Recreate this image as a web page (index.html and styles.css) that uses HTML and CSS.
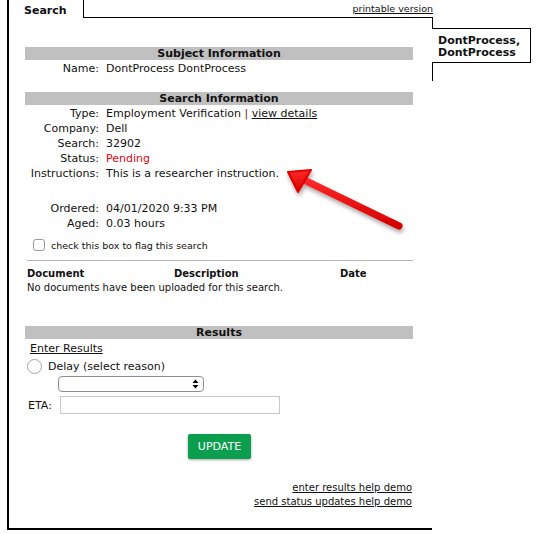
FILE: index.html
```html
<!DOCTYPE html>
<html>
<head>
<meta charset="utf-8">
<link rel="stylesheet" href="styles.css">
</head>
<body>
<div class="page">
  <div class="tabs">
    <div class="tab-active">Search</div>
    <div class="tab-rest"><a href="#" class="link small">printable version</a></div>
  </div>
  <div class="body">
    <div class="main">
      <div class="bar">Subject Information</div>
      <div class="fields">
        <div class="lbl">Name:</div><div class="val">DontProcess DontProcess</div>
      </div>
      <div class="bar bar-gap">Search Information</div>
      <div class="fields">
        <div class="lbl">Type:</div><div class="val">Employment Verification <span class="pipe">|</span> <a href="#" class="link">view details</a></div>
        <div class="lbl">Company:</div><div class="val">Dell</div>
        <div class="lbl">Search:</div><div class="val">32902</div>
        <div class="lbl">Status:</div><div class="val red">Pending</div>
        <div class="lbl">Instructions:</div><div class="val">This is a researcher instruction.</div>
      </div>
      <div class="fields fields-gap">
        <div class="lbl">Ordered:</div><div class="val">04/01/2020 9:33 PM</div>
        <div class="lbl">Aged:</div><div class="val">0.03 hours</div>
      </div>
      <label class="flag"><span class="checkbox"></span><span>check this box to flag this search</span></label>
      <div class="rule"></div>
      <div class="docs-head">
        <span class="c1">Document</span><span class="c2">Description</span><span class="c3">Date</span>
      </div>
      <div class="docs-none">No documents have been uploaded for this search.</div>
      <div class="bar bar-results">Results</div>
      <div class="enter"><a href="#" class="link">Enter Results</a></div>
      <div class="delay"><span class="radio"></span><span>Delay (select reason)</span></div>
      <div class="select">
        <svg width="7" height="10" viewBox="0 0 7 10"><path d="M3.5 0.5 L6.5 4 L0.5 4 Z M3.5 9.5 L6.5 6 L0.5 6 Z" fill="#000"/></svg>
      </div>
      <div class="eta"><span>ETA:</span><span class="input"></span></div>
      <div class="btn-row"><button class="btn">UPDATE</button></div>
      <div class="help">
        <a href="#" class="link">enter results help demo</a>
        <a href="#" class="link">send status updates help demo</a>
      </div>
    </div>
    <div class="side">
      <div class="side-top"></div>
      <div class="vtab">DontProcess,<br>DontProcess</div>
      <div class="side-bottom"></div>
    </div>
  </div>
  <svg class="arrow" width="545" height="534" viewBox="0 0 545 534">
    <defs>
      <linearGradient id="rg" x1="0" y1="0" x2="0" y2="1">
        <stop offset="0" stop-color="#ff2a2a"/>
        <stop offset="1" stop-color="#d40000"/>
      </linearGradient>
      <filter id="sh" x="-20%" y="-20%" width="140%" height="160%">
        <feDropShadow dx="1" dy="3" stdDeviation="2" flood-color="#000" flood-opacity="0.35"/>
      </filter>
    </defs>
    <g filter="url(#sh)">
      <line x1="399" y1="226" x2="302" y2="179" stroke="url(#rg)" stroke-width="7" stroke-linecap="round"/>
      <path d="M288 172 L311 170 L298 192 Z" fill="url(#rg)" stroke="#e00000" stroke-width="2" stroke-linejoin="round"/>
    </g>
  </svg>
</div>
</body>
</html>
```

FILE: styles.css
```css
* { box-sizing: border-box; }
body {
  margin: 0;
  font-family: "DejaVu Sans", Verdana, sans-serif;
  font-size: 10px;
  color: #111;
  background: #fff;
}
.page {
  position: relative;
  width: 545px;
  height: 534px;
  overflow: hidden;
}
.link { color: #111; text-decoration: underline; }
.small { font-size: 9.5px; }
.tabs {
  display: flex;
  height: 18px;
  margin-left: 7px;
}
.tab-active {
  width: 77px;
  border-left: 2px solid #000;
  border-right: 1px solid #000;
  padding: 4px 0 0 15px;
  font-weight: bold;
  font-size: 11px;
}
.tab-rest {
  width: 349px;
  border-bottom: 1px solid #000;
  text-align: right;
  padding-top: 3px;
}
.body {
  display: flex;
  margin-left: 7px;
}
.main {
  width: 425px;
  height: 512px;
  border-left: 2px solid #000;
  border-bottom: 2px solid #000;
  padding: 29px 19px 0 16px;
}
.side { width: 99px; }
.side-top { height: 10px; border-left: 1px solid #000; }
.vtab {
  height: 35px;
  border: 1px solid #000;
  border-left: none;
  padding: 6px 0 0 6px;
  font-weight: bold;
  font-size: 11px;
  line-height: 12px;
}
.side-bottom { height: 18px; border-left: 1px solid #000; }
.bar {
  background: #c0c0c0;
  height: 13px;
  line-height: 14px;
  text-align: center;
  font-weight: bold;
  font-size: 11px;
}
.bar-gap { margin-top: 16px; }
.bar-results { margin-top: 31px; }
.fields {
  display: grid;
  grid-template-columns: 74px 1fr;
  column-gap: 7px;
  line-height: 15px;
  font-size: 11px;
  margin-top: 1px;
}
.fields-gap { margin-top: 20px; }
.lbl { text-align: right; }
.red { color: #e8000b; }
.pipe { color: #6b1a1a; }
.flag {
  display: flex;
  align-items: center;
  gap: 6px;
  margin: 7px 0 0 8px;
  height: 14px;
  font-size: 9.5px;
}
.checkbox {
  width: 12px;
  height: 12px;
  border: 1px solid #9a9a9a;
  border-radius: 3px;
  background: #fff;
}
.rule {
  margin: 8px 0 0 2px;
  border-top: 1px solid #b5b5b5;
  width: 386px;
}
.docs-head {
  display: flex;
  margin-top: 6px;
  padding-left: 2px;
  line-height: 14px;
  font-weight: bold;
}
.c1 { width: 147px; }
.c2 { width: 166px; }
.docs-none { padding-left: 2px; line-height: 14px; }
.enter { margin: 2px 0 0 5px; line-height: 15px; font-size: 11px; }
.delay {
  display: flex;
  align-items: center;
  gap: 6px;
  margin-top: 3px;
  padding-left: 2px;
  height: 15px;
  font-size: 11px;
}
.radio {
  width: 15px;
  height: 15px;
  border: 1px solid #a5a5a5;
  border-radius: 50%;
  background: #fff;
}
.select {
  margin: 2px 0 0 33px;
  width: 146px;
  height: 16px;
  border: 1px solid #8e8e8e;
  border-radius: 4px;
  display: flex;
  justify-content: flex-end;
  align-items: center;
  padding-right: 4px;
}
.eta {
  display: flex;
  align-items: center;
  gap: 8px;
  margin-top: 4px;
  padding-left: 3px;
  font-size: 11px;
}
.input {
  width: 220px;
  height: 18px;
  border: 1px solid #c8c8c8;
}
.btn-row { margin: 20px 0 0 163px; }
.btn {
  width: 63px;
  height: 25px;
  background: #0b9e4f;
  color: #fff;
  border: none;
  border-radius: 2px;
  font-family: "DejaVu Sans", Verdana, sans-serif;
  font-size: 11px;
  box-shadow: 0 1px 3px rgba(0,0,0,0.35);
  padding: 0;
}
.help {
  display: flex;
  flex-direction: column;
  align-items: flex-end;
  margin: 22px 1px 0 0;
  line-height: 14px;
}
.arrow {
  position: absolute;
  left: 0;
  top: 0;
  pointer-events: none;
}
```
